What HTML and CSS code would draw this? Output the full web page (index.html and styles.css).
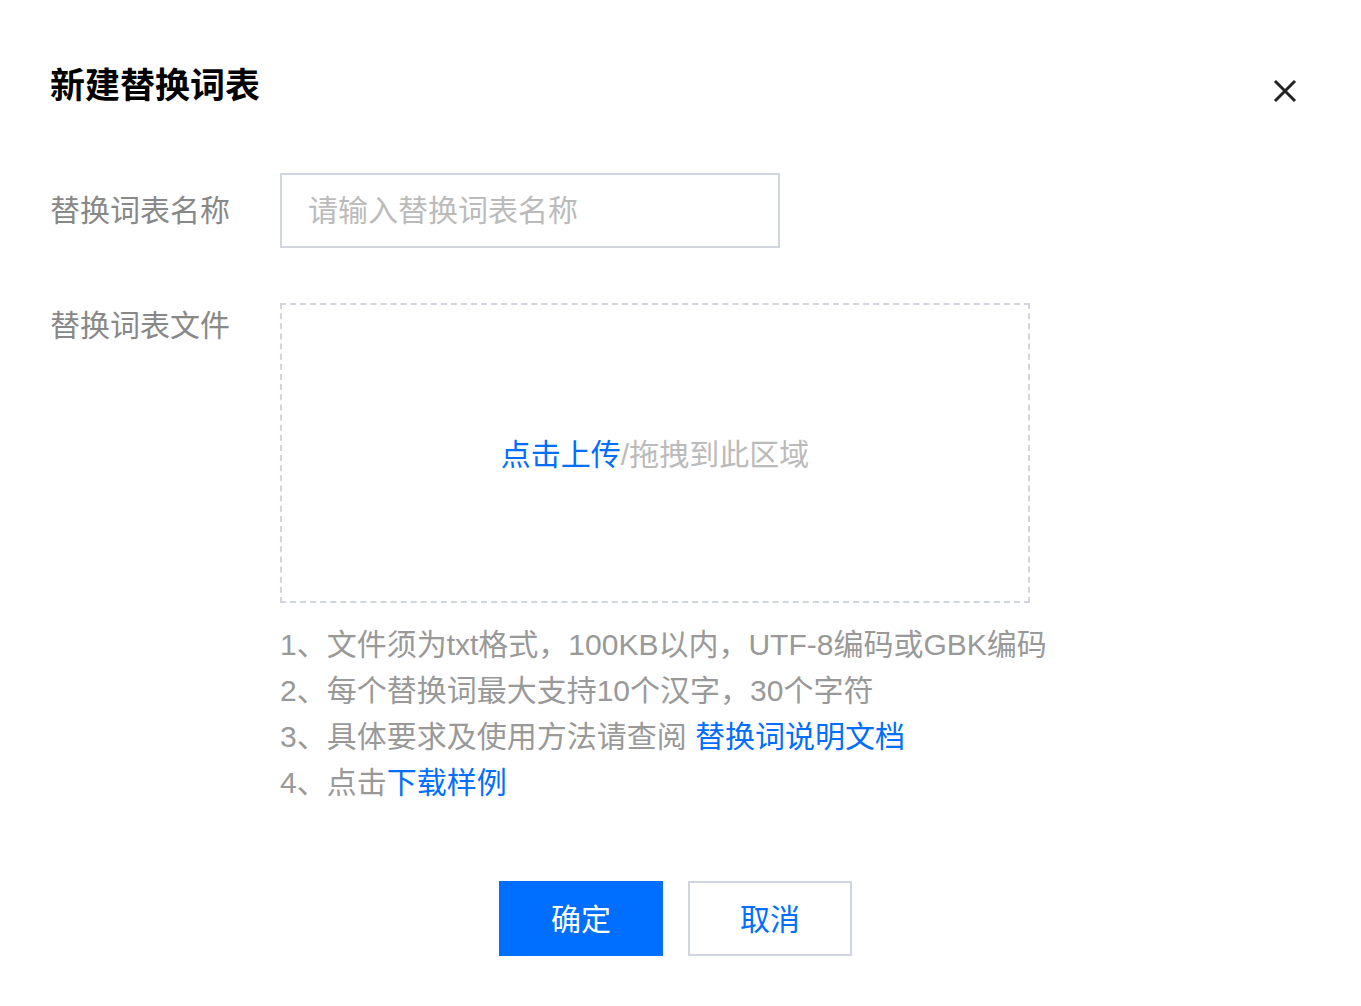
FILE: index.html
```html
<!DOCTYPE html>
<html lang="zh-CN">
<head>
<meta charset="utf-8">
<title>新建替换词表</title>
<link rel="stylesheet" href="styles.css">
</head>
<body>
<div class="dialog">
  <div class="dialog-header">
    <h2 class="dialog-title">新建替换词表</h2>
    <button class="close-btn" aria-label="关闭">
      <svg width="26" height="26" viewBox="0 0 26 26"><path d="M3 3 L23 23 M23 3 L3 23" stroke="#222" stroke-width="3" stroke-linecap="butt" fill="none"/></svg>
    </button>
  </div>
  <div class="dialog-body">
    <div class="form-row">
      <label class="form-label">替换词表名称</label>
      <div class="form-control">
        <input class="text-input" type="text" placeholder="请输入替换词表名称">
      </div>
    </div>
    <div class="form-row form-row-upload">
      <label class="form-label">替换词表文件</label>
      <div class="form-control">
        <div class="upload-area">
          <span class="link">点击上传</span><span class="upload-hint">/拖拽到此区域</span>
        </div>
        <ol class="notes">
          <li>1、文件须为txt格式，100KB以内，UTF-8编码或GBK编码</li>
          <li>2、每个替换词最大支持10个汉字，30个字符</li>
          <li>3、具体要求及使用方法请查阅 <span class="link">替换词说明文档</span></li>
          <li>4、点击<span class="link">下载样例</span></li>
        </ol>
      </div>
    </div>
  </div>
  <div class="dialog-footer">
    <button class="btn btn-primary">确定</button>
    <button class="btn btn-default">取消</button>
  </div>
</div>
</body>
</html>
```

FILE: styles.css
```css
* { box-sizing: border-box; }
html, body { margin: 0; padding: 0; background: #fff; }
body {
  font-family: "Liberation Sans", "Noto Sans CJK SC", sans-serif;
  color: #000;
}
.dialog {
  width: 1361px;
  padding: 0 50px;
}
.dialog-header {
  display: flex;
  justify-content: space-between;
  align-items: flex-start;
  padding-top: 62px;
  height: 173px;
}
.dialog-title {
  margin: 0;
  font-size: 35px;
  line-height: 48px;
  font-weight: bold;
  color: #000;
}
.close-btn {
  border: 0;
  background: none;
  padding: 0;
  margin: 16px 13px 0 0;
  width: 26px;
  height: 26px;
  cursor: pointer;
}
.close-btn svg { display: block; }
.form-row {
  display: flex;
  align-items: flex-start;
}
.form-row-upload { margin-top: 55px; }
.form-label {
  width: 230px;
  flex: none;
  font-size: 30px;
  line-height: 75px;
  color: #888;
}
.form-row-upload .form-label { line-height: 46px; }
.text-input {
  display: block;
  width: 500px;
  height: 75px;
  border: 2px solid #d0d5df;
  padding: 0 26px;
  font-family: inherit;
  font-size: 30px;
  color: #000;
  outline: none;
  background: #fff;
}
.text-input::placeholder { color: #bbb; }
.upload-area {
  width: 750px;
  height: 300px;
  border: 2px dashed #d0d5df;
  display: flex;
  align-items: center;
  justify-content: center;
  font-size: 30px;
  padding-bottom: 2px;
}
.link { color: #006eff; }
.upload-hint { color: #bbb; }
.notes {
  list-style: none;
  margin: 19px 0 0;
  padding: 0;
  font-size: 30px;
  line-height: 46px;
  color: #999;
}
.dialog-footer {
  display: flex;
  justify-content: center;
  gap: 25px;
  margin-top: 75px;
  padding-right: 10px;
}
.btn {
  width: 164px;
  height: 75px;
  font-family: inherit;
  font-size: 30px;
  border: 2px solid transparent;
  padding: 0 0 3px;
  cursor: pointer;
}
.btn-primary { background: #006eff; color: #fff; border-color: #006eff; }
.btn-default { background: #fff; color: #006eff; border-color: #d0d5df; }
```
